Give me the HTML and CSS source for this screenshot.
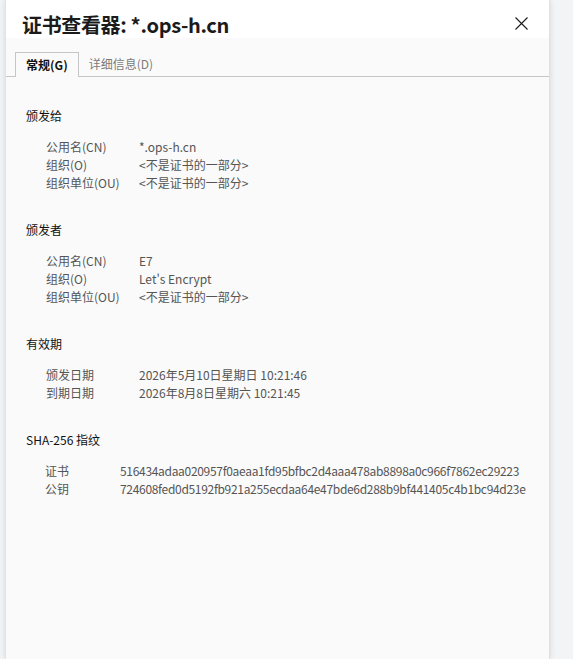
FILE: index.html
```html
<!DOCTYPE html>
<html lang="zh-CN">
<head>
<meta charset="utf-8">
<link rel="stylesheet" href="styles.css">
</head>
<body>
<div class="dialog">
  <div class="header">
    <h1 class="title">证书查看器: *.ops-h.cn</h1>
    <button class="close" aria-label="关闭">
      <svg width="13" height="13" viewBox="0 0 13 13"><path d="M0.5 0.5 L12.5 12.5 M12.5 0.5 L0.5 12.5" stroke="#1b1b1b" stroke-width="1.1" fill="none"/></svg>
    </button>
  </div>
  <div class="body">
    <div class="tabs">
      <div class="tab active">常规(G)</div>
      <div class="tab">详细信息(D)</div>
    </div>
    <div class="content">
      <section class="sec">
        <h2 class="sec-title">颁发给</h2>
        <div class="rows">
          <span class="k">公用名(CN)</span><span class="v">*.ops-h.cn</span>
          <span class="k">组织(O)</span><span class="v">&lt;不是证书的一部分&gt;</span>
          <span class="k">组织单位(OU)</span><span class="v">&lt;不是证书的一部分&gt;</span>
        </div>
      </section>
      <section class="sec">
        <h2 class="sec-title">颁发者</h2>
        <div class="rows">
          <span class="k">公用名(CN)</span><span class="v">E7</span>
          <span class="k">组织(O)</span><span class="v">Let's Encrypt</span>
          <span class="k">组织单位(OU)</span><span class="v">&lt;不是证书的一部分&gt;</span>
        </div>
      </section>
      <section class="sec">
        <h2 class="sec-title">有效期</h2>
        <div class="rows">
          <span class="k">颁发日期</span><span class="v">2026年5月10日星期日 10:21:46</span>
          <span class="k">到期日期</span><span class="v">2026年8月8日星期六 10:21:45</span>
        </div>
      </section>
      <section class="sec">
        <h2 class="sec-title">SHA-256 指纹</h2>
        <div class="rows narrow">
          <span class="k">证书</span><span class="v hash">516434adaa020957f0aeaa1fd95bfbc2d4aaa478ab8898a0c966f7862ec29223</span>
          <span class="k">公钥</span><span class="v hash">724608fed0d5192fb921a255ecdaa64e47bde6d288b9bf441405c4b1bc94d23e</span>
        </div>
      </section>
    </div>
  </div>
</div>
</body>
</html>
```

FILE: styles.css
```css
html, body {
  margin: 0;
  padding: 0;
  height: 100%;
}
body {
  background: #f3f4f6;
  font-family: "Noto Sans CJK SC", "Noto Sans", sans-serif;
  overflow: hidden;
}
.dialog {
  margin-left: 5px;
  width: 545px;
  height: 659px;
  display: flex;
  flex-direction: column;
  box-shadow: 0 0 6px rgba(0,0,0,0.12);
  border-left: 1px solid #e2e3e6;
  border-right: 1px solid #dfe0e3;
  box-sizing: border-box;
}
.header {
  background: #ffffff;
  height: 38px;
  display: flex;
  align-items: flex-start;
  justify-content: space-between;
  padding: 0 21px 0 16px;
}
.title {
  margin: 0;
  font-size: 20px;
  font-weight: 700;
  line-height: 24px;
  padding-top: 13px;
  color: #1b1b1b;
  white-space: nowrap;
  letter-spacing: -0.35px;
}
.close {
  background: none;
  border: 0;
  padding: 0;
  margin-top: 17px;
  width: 13px;
  height: 13px;
  display: block;
}
.close svg { display: block; }
.body {
  flex: 1;
  background: #fafafa;
}
.tabs {
  display: flex;
  margin-top: 14px;
  padding-left: 9px;
  border-bottom: 1px solid #c6c6c6;
  height: 24px;
}
.tab {
  font-size: 12px;
  line-height: 24px;
  padding: 0 10px;
  color: #7a7a7a;
  height: 25px;
  box-sizing: border-box;
}
.tab.active {
  color: #111;
  font-weight: 700;
  background: #fafafa;
  border: 1px solid #c6c6c6;
  border-bottom: 0;
  height: 25px;
  line-height: 23px;
  padding: 0 10px;
}
.content {
  padding: 30px 0 0 20px;
}
.sec {
  margin-bottom: 29px;
}
.sec-title {
  margin: 0;
  font-size: 12px;
  font-weight: 400;
  line-height: 18px;
  color: #111;
}
.rows {
  display: grid;
  grid-template-columns: 93px auto;
  margin-top: 13px;
  padding-left: 20px;
  font-size: 12px;
  line-height: 18px;
  color: #555;
  justify-content: start;
}
.rows.narrow {
  grid-template-columns: 75px auto;
  padding-left: 19px;
}
.k, .v {
  white-space: nowrap;
}
.hash {
  letter-spacing: -0.31px;
}
```
